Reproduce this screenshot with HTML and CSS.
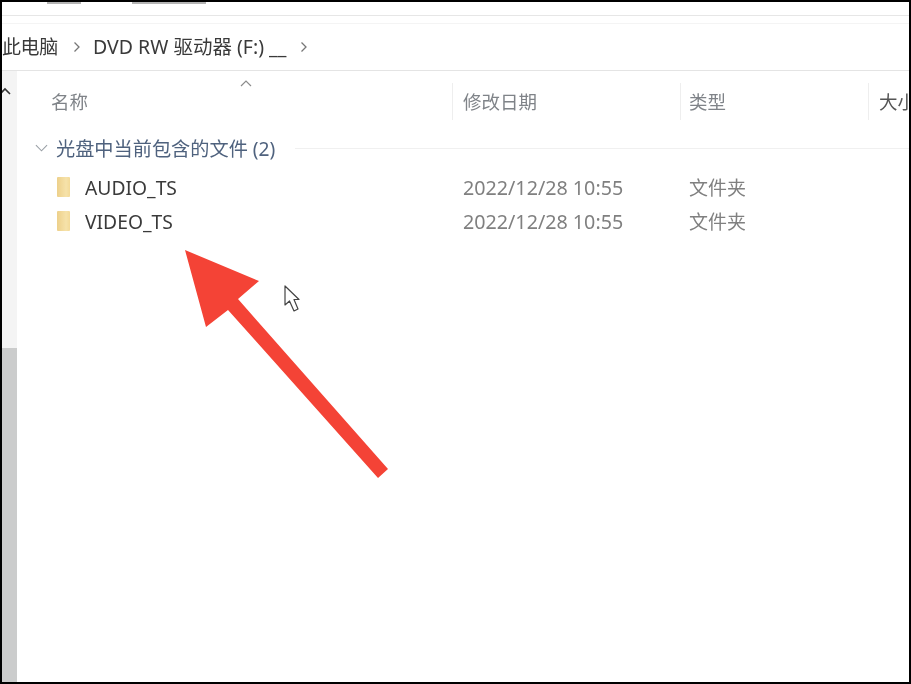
FILE: index.html
```html
<!DOCTYPE html>
<html lang="zh-CN">
<head>
<meta charset="utf-8">
<title>DVD RW 驱动器 (F:)</title>
<link rel="stylesheet" href="styles.css">
</head>
<body>
<div class="frame">
  <div class="topstrip">
    <span class="stub stub-a"></span>
    <span class="stub stub-b"></span>
  </div>
  <nav class="address">
    <span class="crumb crumb-pc">此电脑</span>
    <svg class="sep sep-a" viewBox="0 0 8 12"><path d="M1.5 1.5 6 6l-4.500 4.500"/></svg>
    <span class="crumb crumb-dvd">DVD RW 驱动器 (F:) __</span>
    <svg class="sep sep-b" viewBox="0 0 8 12"><path d="M1.5 1.500 6 6l-4.500 4.500"/></svg>
  </nav>
  <div class="body">
    <aside class="rail">
      <svg class="rail-up" viewBox="0 0 12 8"><path d="M1 7l5-5 5 5"/></svg>
      <div class="rail-thumb"></div>
    </aside>
    <main class="list">
      <div class="sort-row">
        <svg class="sort" viewBox="0 0 12 7"><path d="M1 6l5-5 5 5"/></svg>
      </div>
      <div class="head row">
        <div class="col-name">名称</div>
        <div class="col-date">修改日期</div>
        <div class="col-type">类型</div>
        <div class="col-size">大小</div>
      </div>
      <div class="group">
        <svg class="group-chev" viewBox="0 0 14 8"><path d="M1 1l6 6 6-6"/></svg>
        <span class="group-name">光盘中当前包含的文件 (2)</span>
        <span class="group-line"></span>
      </div>
      <div class="row item">
        <div class="col-name"><span class="folder"></span>AUDIO_TS</div>
        <div class="col-date">2022/12/28 10:55</div>
        <div class="col-type">文件夹</div>
      </div>
      <div class="row item">
        <div class="col-name"><span class="folder"></span>VIDEO_TS</div>
        <div class="col-date">2022/12/28 10:55</div>
        <div class="col-type">文件夹</div>
      </div>
    </main>
  </div>
  <svg class="overlay" viewBox="0 0 911 684">
    <path class="arrow" d="M185 250 259 281 238 299 388 469 378 478 228 310 206 327Z"/>
    <path class="cursor" d="M285 286V305L289.500 301 294 311 298 309 294 299.500H299Z"/>
  </svg>
</div>
</body>
</html>
```
FILE: styles.css
```css
* { box-sizing: border-box; }
html, body { margin: 0; padding: 0; background: #fff; }
body { width: 911px; height: 684px; overflow: hidden; font-family: "Noto Sans", "Noto Sans CJK SC", sans-serif; }
.frame {
  position: relative;
  width: 911px;
  height: 684px;
  border: 2px solid #000;
  display: flex;
  flex-direction: column;
  overflow: hidden;
  background: #fff;
}
.topstrip {
  height: 14px;
  flex: none;
  border-bottom: 1px solid #e6e6e6;
  position: relative;
}
.stub { position: absolute; top: 0; height: 2px; background: #b4b4b4; filter: blur(.5px); }
.stub-a { left: 45px; width: 34px; }
.stub-b { left: 130px; width: 74px; }
.address {
  height: 48px;
  flex: none;
  margin-top: 7px;
  border-top: 1px solid #f4f4f4;
  border-bottom: 1px solid #e4e4e4;
  display: flex;
  align-items: center;
  color: #3a3a3a;
}
.crumb { white-space: nowrap; filter: blur(.4px); line-height: 24px; }
.sep { width: 8px; height: 12px; fill: none; stroke: #777; stroke-width: 1.300; flex: none; }
.sep-a { margin-left: 15px; margin-right: 12px; }
.crumb-pc { font-size: 19px; letter-spacing: -.3px; width: 56px; overflow: hidden; direction: rtl; }
.crumb-dvd { font-size: 19.500px; }
.sep-b { margin-left: 14px; }
.body { flex: 1; display: flex; min-height: 0; }
.rail { width: 15px; flex: none; background: #f4f4f4; display: flex; flex-direction: column; }
.rail-up { width: 12px; height: 8px; fill: none; stroke: #333; stroke-width: 1.600; margin: 16px 0 0 -3px; flex: none; }
.rail-thumb { margin-top: auto; height: 334px; background: #cbcccc; }
.list { flex: 1; min-width: 0; color: #444; font-size: 19px; }
.sort-row { height: 18px; padding: 9px 0 0 223px; display: flex; }
.sort { width: 12px; height: 7px; fill: none; stroke: #8c8c8c; stroke-width: 1.200; }
.row { display: flex; align-items: center; }
.head { height: 37px; color: #7f8388; margin-top: -6px; font-size: 18.500px; }
.head > div { height: 100%; padding-bottom: 2px; display: flex; align-items: center; filter: blur(.4px); }
.col-name { width: 435px; padding-left: 34px; flex: none; }
.col-date { width: 228px; padding-left: 10px; flex: none; }
.col-type { width: 188px; padding-left: 8px; flex: none; }
.col-size { flex: 1; padding-left: 10px; white-space: nowrap; color: #555; }
.head .col-date, .head .col-type, .head .col-size { border-left: 1px solid #eee; }
.item .col-date { padding-left: 11px; }
.item .col-type { padding-left: 9px; }
.group { height: 32px; margin: 12px 0 6px; display: flex; align-items: center; padding-left: 18px; }
.group-chev { width: 13px; height: 8px; fill: none; stroke: #9aa0a6; stroke-width: 1.200; flex: none; }
.group-name { margin-left: 8px; color: #4f627e; white-space: nowrap; font-size: 19.200px; filter: blur(.4px); }
.group-line { flex: 1; height: 1px; background: #f0f0f0; margin-left: 20px; }
.item { height: 34px; color: #808080; }
.item .col-date { font-size: 19.700px; }
.item .col-name { color: #3a3a3a; display: flex; align-items: center; padding-left: 40px; font-size: 19.300px; }
.item > div { filter: blur(.35px); }
.folder { width: 13px; height: 20px; background: linear-gradient(90deg, #edd08a, #f6e2aa 70%, #f3da98); border-radius: 1px; margin-right: 15px; flex: none; }
.overlay { position: absolute; left: -2px; top: -2px; width: 911px; height: 684px; }
.arrow { fill: #f44336; }
.cursor { fill: #fff; stroke: #444; stroke-width: 1.200; stroke-linejoin: round; }
```
